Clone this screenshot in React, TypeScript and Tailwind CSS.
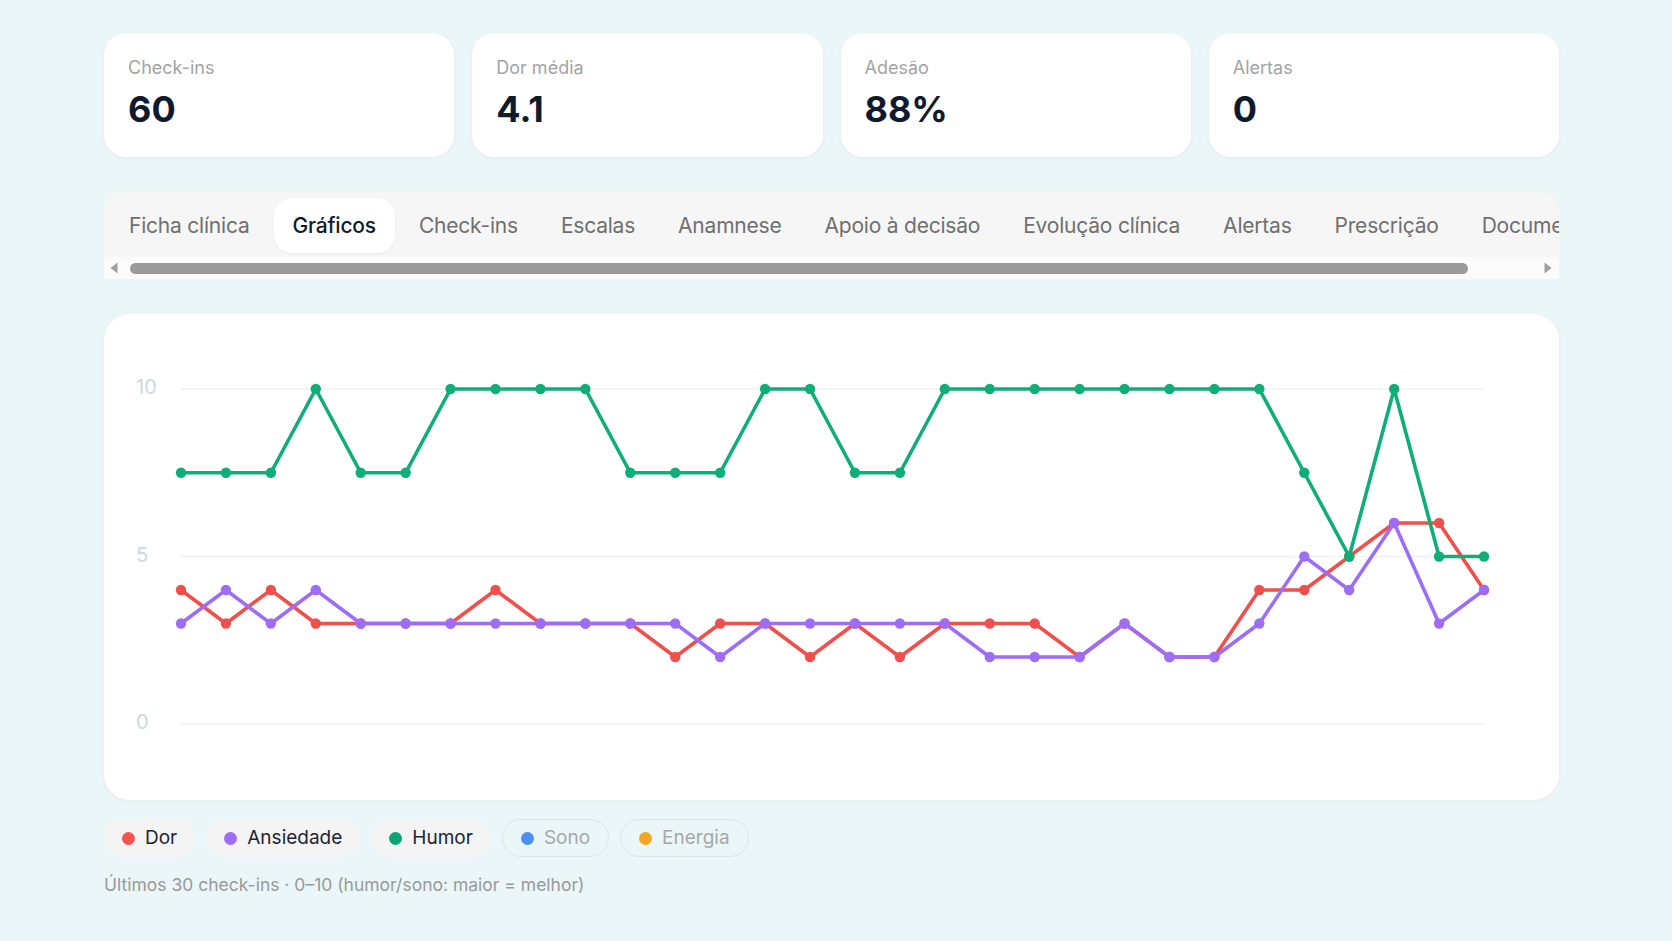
import React from 'react';

const stats = [
  { label: 'Check-ins', value: '60' },
  { label: 'Dor média', value: '4.1' },
  { label: 'Adesão', value: '88%' },
  { label: 'Alertas', value: '0' },
];

const tabs = [
  'Ficha clínica',
  'Gráficos',
  'Check-ins',
  'Escalas',
  'Anamnese',
  'Apoio à decisão',
  'Evolução clínica',
  'Alertas',
  'Prescrição',
  'Documentos',
];

const dor = [4, 3, 4, 3, 3, 3, 3, 4, 3, 3, 3, 2, 3, 3, 2, 3, 2, 3, 3, 3, 2, 3, 2, 2, 4, 4, 5, 6, 6, 4];
const ansiedade = [3, 4, 3, 4, 3, 3, 3, 3, 3, 3, 3, 3, 2, 3, 3, 3, 3, 3, 2, 2, 2, 3, 2, 2, 3, 5, 4, 6, 3, 4];
const humor = [7.5, 7.5, 7.5, 10, 7.5, 7.5, 10, 10, 10, 10, 7.5, 7.5, 7.5, 10, 10, 7.5, 7.5, 10, 10, 10, 10, 10, 10, 10, 10, 7.5, 5, 10, 5, 5];

const series = [
  { name: 'Dor', color: '#f04f4b', data: dor },
  { name: 'Ansiedade', color: '#9d6ef5', data: ansiedade },
  { name: 'Humor', color: '#0fae78', data: humor },
];

const legend = [
  { name: 'Dor', color: 'bg-[#f25452]', active: true },
  { name: 'Ansiedade', color: 'bg-[#9d6ef5]', active: true },
  { name: 'Humor', color: 'bg-[#0aa574]', active: true },
  { name: 'Sono', color: 'bg-[#4b8ef0]', active: false },
  { name: 'Energia', color: 'bg-[#f6a623]', active: false },
];

// chart geometry, in card coordinates
const X0 = 77;
const X1 = 1380;
const Y_TOP = 75;
const Y_ZERO = 410;
const px = (i: number) => X0 + (i * (X1 - X0)) / 29;
const py = (v: number) => Y_ZERO - (v * (Y_ZERO - Y_TOP)) / 10;

function Chart() {
  return (
    <svg viewBox="0 0 1455 486" className="block w-full h-full">
      {[10, 5, 0].map((v) => (
        <g key={v}>
          <line x1={X0} x2={X1} y1={py(v)} y2={py(v)} stroke="#eef2f6" strokeWidth={1.5} />
          <text
            x={32}
            y={py(v)}
            dominantBaseline="middle"
            fontSize={20}
            fill="#cdd6e2"
            fontFamily="Inter, sans-serif"
          >
            {v}
          </text>
        </g>
      ))}
      {series.map((s) => (
        <g key={s.name}>
          <polyline
            points={s.data.map((v, i) => `${px(i)},${py(v)}`).join(' ')}
            fill="none"
            stroke={s.color}
            strokeWidth={3.6}
            strokeLinejoin="round"
          />
          {s.data.map((v, i) => (
            <circle key={i} cx={px(i)} cy={py(v)} r={5.2} fill={s.color} />
          ))}
        </g>
      ))}
    </svg>
  );
}

export default function App() {
  return (
    <div className="min-h-screen bg-[#eaf6f8] font-['Inter',sans-serif]">
      <div className="ml-[104px] w-[1455px] pt-[33px]">
        {/* Stat cards */}
        <div className="grid grid-cols-4 gap-[18px]">
          {stats.map((s) => (
            <div
              key={s.label}
              className="h-[124px] rounded-[22px] bg-white px-6 pt-[23px] shadow-[0_1px_4px_rgba(15,23,42,0.05)]"
            >
              <div className="text-[18px] leading-6 text-[#a3a3a3]">{s.label}</div>
              <div className="mt-[6px] text-[36px] leading-[46px] font-bold text-[#0f1b2d]">{s.value}</div>
            </div>
          ))}
        </div>

        {/* Tabs */}
        <div className="mt-[35px] overflow-hidden rounded-t-[18px] bg-[#f6f6f6]">
          <div className="flex w-max items-center gap-[5px] pl-[6px] pr-6 pt-[6px] pb-[4px]">
            {tabs.map((t) => (
              <div
                key={t}
                className={`h-[55px] flex items-center px-[19px] rounded-[18px] text-[21px] whitespace-nowrap tracking-[-0.01em] ${
                  t === 'Gráficos'
                    ? 'bg-white text-[#0f1b2d] font-medium shadow-[0_1px_3px_rgba(0,0,0,0.06)]'
                    : 'text-[#6f6f6f]'
                }`}
              >
                {t}
              </div>
            ))}
          </div>
          {/* horizontal scrollbar */}
          <div className="h-[22px] flex items-center bg-[#fbfbfb] pl-[6px] pr-[7px]">
            <svg width="8" height="12" viewBox="0 0 8 12" className="shrink-0">
              <path d="M7.5 0.5 L0.5 6 L7.5 11.5 Z" fill="#a0a0a0" />
            </svg>
            <div className="ml-[12px] h-[11px] w-[1338px] rounded-full bg-[#9b9b9b]" />
            <div className="flex-1" />
            <svg width="8" height="12" viewBox="0 0 8 12" className="shrink-0">
              <path d="M0.5 0.5 L7.5 6 L0.5 11.5 Z" fill="#a0a0a0" />
            </svg>
          </div>
        </div>

        {/* Chart */}
        <div className="mt-[35px] h-[486px] rounded-[26px] bg-white shadow-[0_1px_4px_rgba(15,23,42,0.04)]">
          <Chart />
        </div>

        {/* Legend */}
        <div className="mt-[19px] flex items-center gap-[11px]">
          {legend.map((l) => (
            <div
              key={l.name}
              className={`h-[38px] flex items-center gap-[10px] rounded-full px-[18px] text-[19px] ${
                l.active ? 'bg-[#f4f4f4] text-[#1c2433]' : 'border border-[#dde6e8] text-[#a8a8a8]'
              }`}
            >
              <span className={`w-[13px] h-[13px] rounded-full ${l.color}`} />
              <span>{l.name}</span>
            </div>
          ))}
        </div>

        <div className="mt-[16px] text-[17.5px] leading-6 text-[#9a9a9a]">
          Últimos 30 check-ins · 0–10 (humor/sono: maior = melhor)
        </div>
      </div>
    </div>
  );
}
